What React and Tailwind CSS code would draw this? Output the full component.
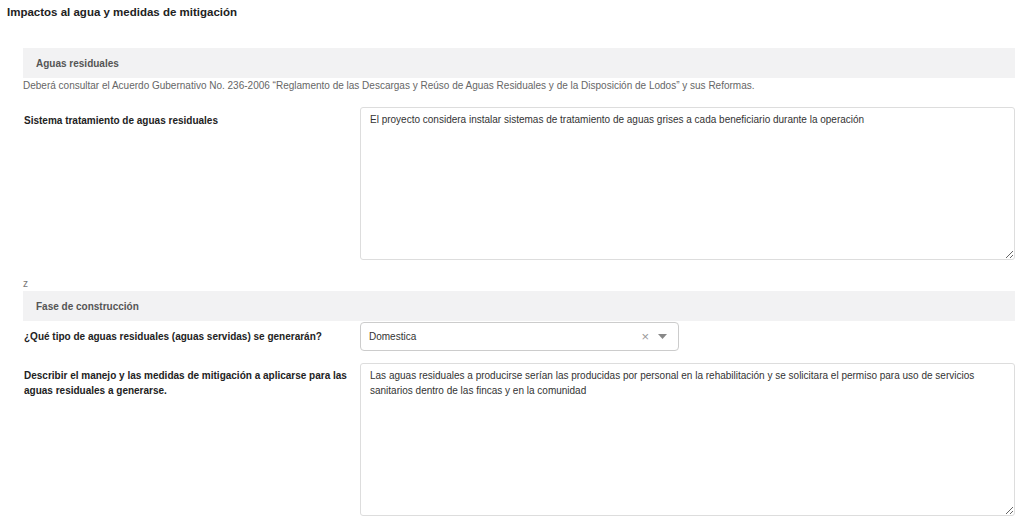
import React from "react";

const Section = ({ title }) => (
  <div className="h-[30px] bg-[#f2f2f3] flex items-center pl-[13px] text-[10px] font-bold text-[#555]">
    {title}
  </div>
);

const Row = ({ label, children, className = "", labelClass = "" }) => (
  <div className={"flex " + className}>
    <div className={"w-[337px] shrink-0 pl-[1px] pr-3 text-[10px] font-bold text-[#222] leading-[15px] " + labelClass}>{label}</div>
    <div className="flex-1">{children}</div>
  </div>
);

const Area = ({ value }) => (
  <textarea
    readOnly
    value={value}
    className="block w-full h-[153px] border border-[#ddd] rounded-[3px] px-[9px] pt-[4px] text-[10px] text-[#333] leading-[15px] bg-white"
  />
);

export default function App() {
  return (
    <div className="w-[1024px] h-[520px] bg-white overflow-hidden font-['Liberation_Sans',Arial,sans-serif]">
      <h1 className="pl-[7px] pt-[4px] text-[11.5px] leading-[16px] font-bold text-[#222]">Impactos al agua y medidas de mitigación</h1>

      <div className="ml-[23px] mr-[9px] mt-[28px]">
        <Section title="Aguas residuales" />
        <p className="text-[10px] text-[#666] leading-[14px] mt-[1px]">
          Deberá consultar el Acuerdo Gubernativo No. 236-2006 “Reglamento de las Descargas y Reúso de Aguas Residuales y de la Disposición de Lodos” y sus Reformas.
        </p>

        <Row label="Sistema tratamiento de aguas residuales" className="mt-[14px] items-start" labelClass="pt-[6px]">
          <Area value="El proyecto considera instalar sistemas de tratamiento de aguas grises a cada beneficiario durante la operación" />
        </Row>

        <p className="text-[10px] text-[#777] mt-[17px] leading-[14px]">z</p>
        <Section title="Fase de construcción" />

        <Row label="¿Qué tipo de aguas residuales (aguas servidas) se generarán?" className="mt-[1px] items-center">
          <div className="w-[319px] h-[29px] border border-[#ccc] rounded-[4px] flex items-center pl-[8px] pr-[11px] text-[10px] text-[#333]">
            <span className="flex-1">Domestica</span>
            <span className="text-[#999] text-[13px] mr-[9px] leading-none">×</span>
            <svg width="9" height="5" viewBox="0 0 9 5"><path d="M0 0h9L4.5 5z" fill="#888" /></svg>
          </div>
        </Row>

        <Row label="Describir el manejo y las medidas de mitigación a aplicarse para las aguas residuales a generarse." className="mt-[12px] items-start" labelClass="pt-[5px]">
          <Area value="Las aguas residuales a producirse serían las producidas por personal en la rehabilitación y se solicitara el permiso para uso de servicios sanitarios dentro de las fincas y en la comunidad" />
        </Row>
      </div>
    </div>
  );
}
